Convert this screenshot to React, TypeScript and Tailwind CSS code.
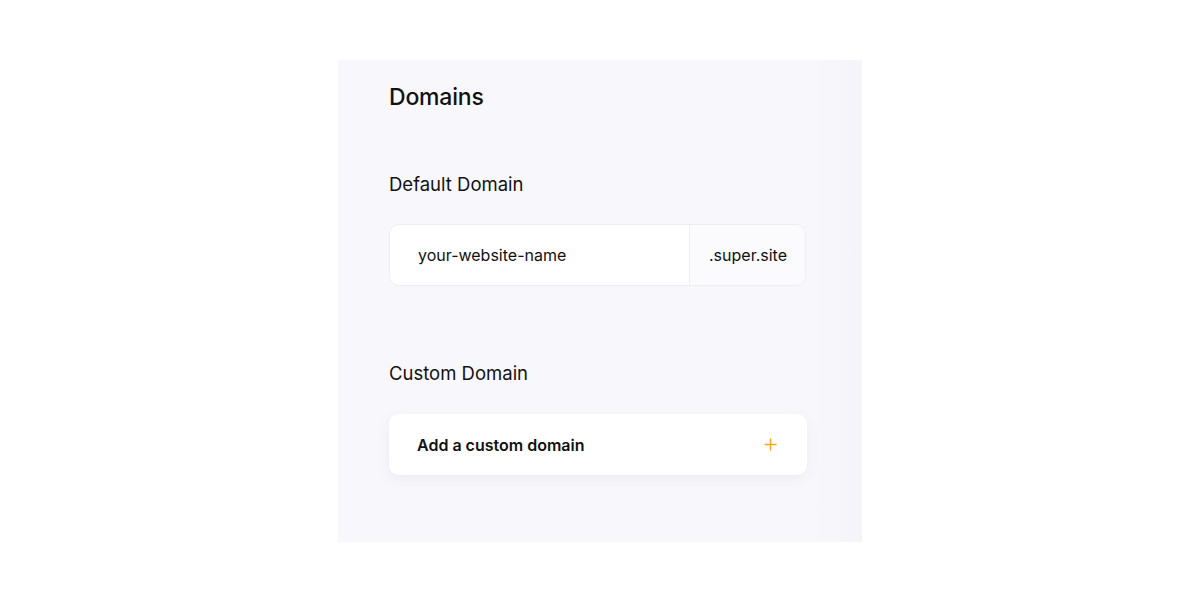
export default function App() {
  return (
    <div className="min-h-[600px] bg-white pt-[60px] font-['Inter',sans-serif] text-[#111]">
      {/* Settings panel */}
      <div className="mx-auto h-[482px] w-[524px] bg-gradient-to-r from-[#f8f8fc] from-90% to-[#f5f5f9] pl-[51px] pr-[55px] pt-[22px]">
        <h1 className="text-[23px] font-medium leading-[30px] tracking-[-0.2px]">Domains</h1>

        <h2 className="mt-[60px] text-[18.5px] leading-[24px]">Default Domain</h2>
        <div className="mt-[28px] flex h-[62px] w-[417px] overflow-hidden rounded-[10px] border border-[#eeeef2] bg-white">
          <div className="flex flex-1 items-center pl-[28px] text-[16px]">your-website-name</div>
          <div className="flex w-[116px] items-center border-l border-[#eeeef2] bg-[#fbfbfd] pl-[19px] text-[16px]">.super.site</div>
        </div>

        <h2 className="mt-[75px] text-[18.5px] leading-[24px]">Custom Domain</h2>
        <div className="mt-[29px] flex h-[61px] w-[418px] items-center justify-between rounded-[10px] bg-white pl-[28px] pr-[30px] shadow-[0_4px_14px_rgba(20,20,60,0.06)]">
          <span className="text-[16px] font-semibold">Add a custom domain</span>
          <svg width="13" height="13" viewBox="0 0 13 13" fill="none" stroke="#f5a623" strokeWidth="1.4">
            <path d="M6.5 0.5v12M0.5 6.5h12" />
          </svg>
        </div>
      </div>
    </div>
  )
}
